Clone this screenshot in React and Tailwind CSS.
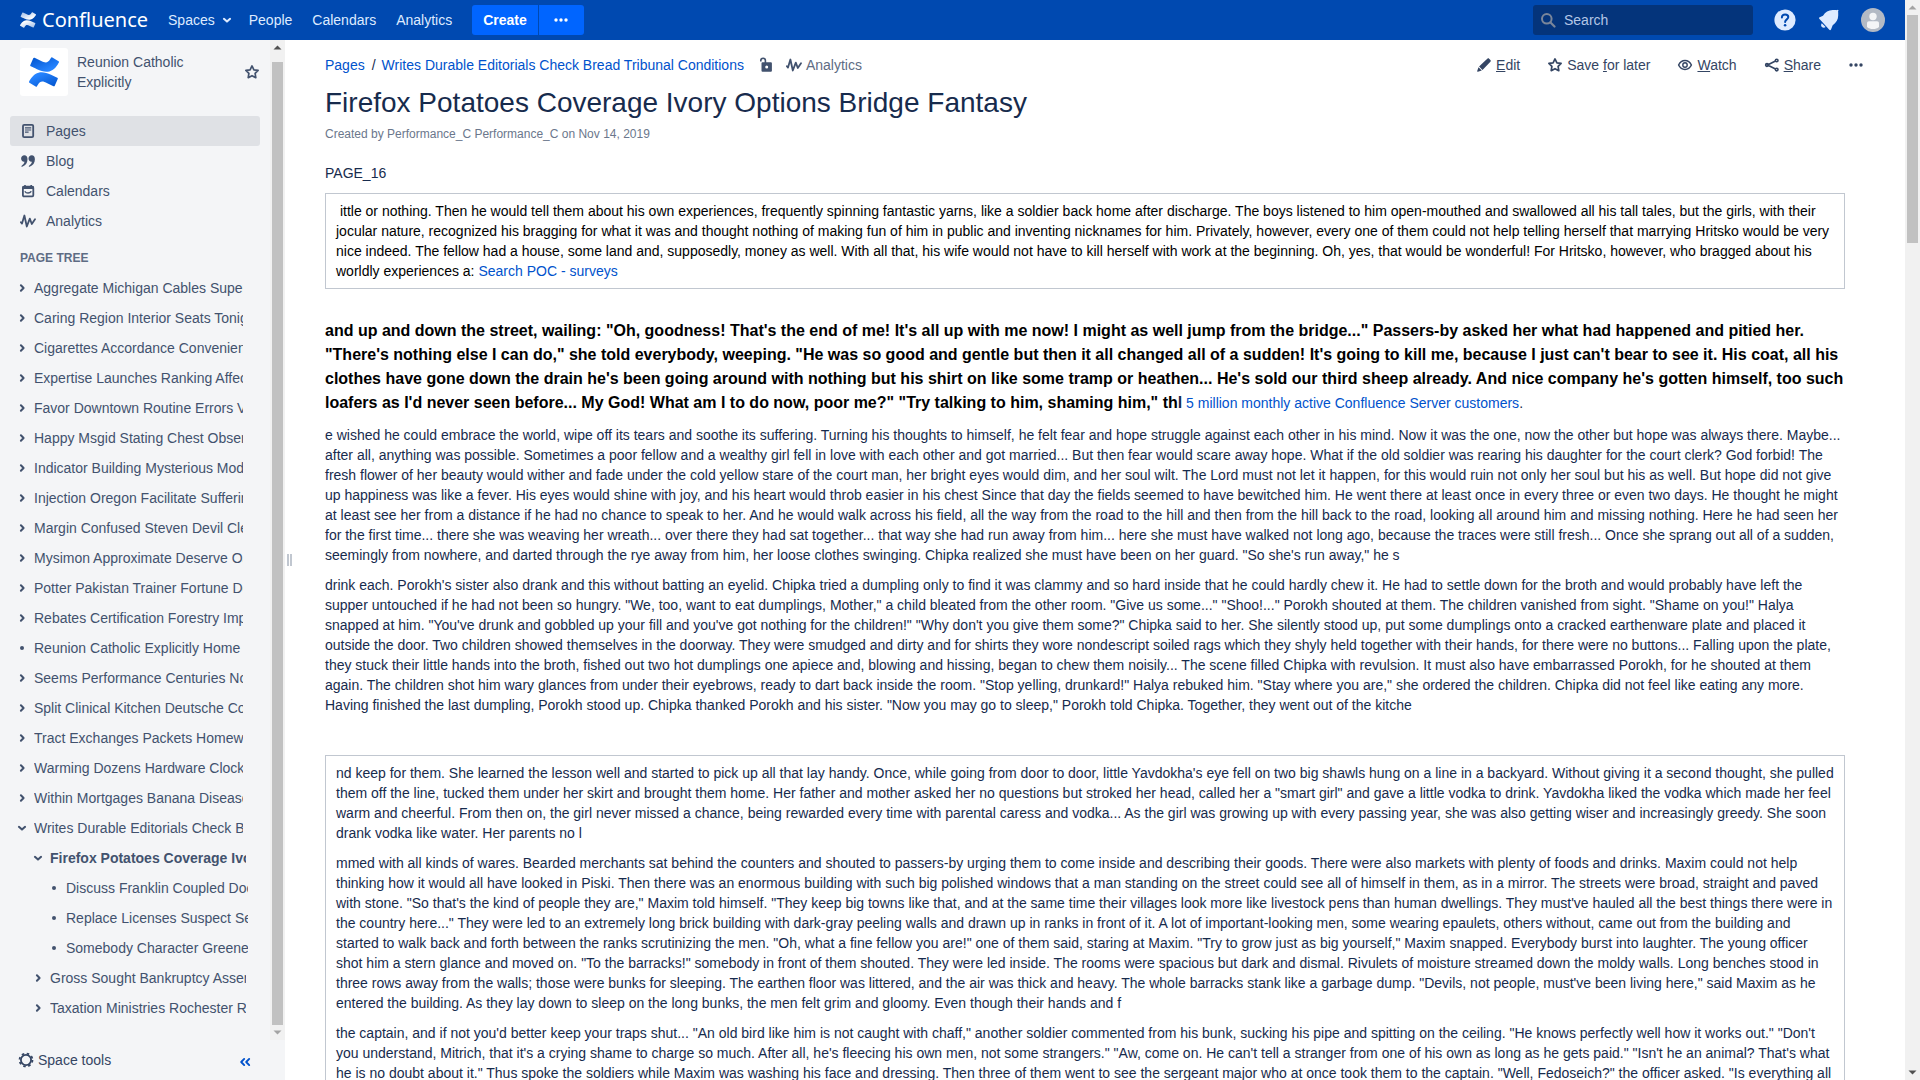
import React from "react";

const iconProps = {
  width: 16,
  height: 16,
  viewBox: "0 0 16 16",
  fill: "none",
  stroke: "currentColor",
  "aria-hidden": true,
  className: "shrink-0",
};

function ConfluenceMark({ id, size, from, to }) {
  return (
    <svg width={size} height={size} viewBox="0 0 24 24" aria-hidden="true" className="shrink-0">
      <defs>
        <linearGradient id={id + "-lower"} x1="1" y1="1" x2="0.2" y2="0.1">
          <stop offset="0" stopColor={from} />
          <stop offset="0.9" stopColor={to} />
        </linearGradient>
        <linearGradient id={id + "-upper"} x1="0" y1="0" x2="0.8" y2="0.9">
          <stop offset="0" stopColor={from} />
          <stop offset="0.9" stopColor={to} />
        </linearGradient>
      </defs>
      <path
        fill={`url(#${id}-lower)`}
        d="M.87 18.257c-.248.382-.53.875-.763 1.245a.764.764 0 0 0 .255 1.04l4.965 3.054a.764.764 0 0 0 1.058-.26c.199-.332.454-.763.733-1.221 1.967-3.247 3.945-2.853 7.508-1.146l4.957 2.337a.764.764 0 0 0 1.028-.382l2.364-5.346a.764.764 0 0 0-.382-1 599.851 599.851 0 0 1-4.965-2.361C10.911 10.97 5.224 11.185.87 18.257z"
      />
      <path
        fill={`url(#${id}-upper)`}
        d="M23.131 5.743c.249-.405.531-.875.764-1.25a.764.764 0 0 0-.256-1.034L18.675.404a.764.764 0 0 0-1.058.26c-.195.335-.451.763-.734 1.225-1.966 3.246-3.945 2.85-7.508 1.146L4.437.694a.764.764 0 0 0-1.027.382L1.046 6.422a.764.764 0 0 0 .382 1c1.039.49 3.105 1.467 4.965 2.361 6.698 3.246 12.392 3.029 16.738-4.04z"
      />
    </svg>
  );
}

function ChevronDown() {
  return (
    <svg {...iconProps}>
      <path d="M4.9 6.8 8 9.6l3.1-2.8" strokeWidth="2" strokeLinecap="round" strokeLinejoin="round" />
    </svg>
  );
}

function ChevronRight() {
  return (
    <svg {...iconProps}>
      <path d="M6.9 5.2 9.6 8l-2.7 2.8" strokeWidth="2" strokeLinecap="round" strokeLinejoin="round" />
    </svg>
  );
}

function Bullet() {
  return (
    <svg {...iconProps} stroke="none">
      <circle cx="8" cy="8" r="2" fill="currentColor" />
    </svg>
  );
}

function Dots() {
  return (
    <svg {...iconProps} stroke="none">
      <g fill="currentColor">
        <circle cx="3" cy="8" r="1.7" />
        <circle cx="8" cy="8" r="1.7" />
        <circle cx="13" cy="8" r="1.7" />
      </g>
    </svg>
  );
}

function Star() {
  return (
    <svg {...iconProps}>
      <path
        d="m8 1.9 1.9 3.9 4.2.6-3 3 .7 4.3L8 11.7l-3.8 2 .7-4.3-3-3 4.2-.6z"
        strokeWidth="1.7"
        strokeLinejoin="round"
      />
    </svg>
  );
}

function PageIcon() {
  return (
    <svg {...iconProps}>
      <rect x="3" y="1.9" width="10.2" height="12.2" rx="1.2" strokeWidth="1.8" />
      <path d="M5 4.9h6.2M5 7h6.2M5 9.1h3.6" strokeWidth="1.2" />
    </svg>
  );
}

function QuoteIcon() {
  return (
    <svg {...iconProps} stroke="none">
      <g fill="currentColor">
        <path d="M4.3 2.2c2 0 3.2 1.5 3.2 4 0 3.6-1.9 6.3-5.3 7.5-.7.2-1.1-.6-.5-1 1.5-1 2.5-2.2 2.8-3.9C2.6 9.1 1.1 7.7 1.1 5.6c0-2 1.4-3.4 3.2-3.4z" />
        <path d="M11.7 2.2c2 0 3.2 1.5 3.2 4 0 3.6-1.9 6.3-5.3 7.5-.7.2-1.1-.6-.5-1 1.5-1 2.5-2.2 2.8-3.9-1.9.3-3.4-1.1-3.4-3.2 0-2 1.4-3.4 3.2-3.4z" />
      </g>
    </svg>
  );
}

function CalendarIcon() {
  return (
    <svg {...iconProps}>
      <rect x="2.9" y="3.7" width="10.4" height="9.6" rx="1" strokeWidth="1.8" />
      <path d="M2.5 4.7h11.2" strokeWidth="2.6" />
      <path d="M5 1.9v2M11.2 1.9v2" strokeWidth="1.6" />
      <path d="M5.2 8.7c.8 1.7 4.8 1.7 5.7 0" strokeWidth="1.4" strokeLinecap="round" />
    </svg>
  );
}

function AnalyticsIcon() {
  return (
    <svg {...iconProps}>
      <path
        d="M.9 9.200 2 10.600 4.400 2.500l2.400 11 3-7.900 2 5.400L15 6.300"
        strokeWidth="1.8"
        strokeLinecap="round"
        strokeLinejoin="round"
      />
    </svg>
  );
}

function UnlockIcon() {
  return (
    <svg {...iconProps}>
      <path d="M2.800 4.600V3.500a2.300 2.300 0 0 1 4.600 0V6" strokeWidth="1.600" />
      <path
        d="M4.500 5.200h8.400a1 1 0 0 1 1 1v7.500a1 1 0 0 1-1 1H4.500a1 1 0 0 1-1-1V6.200a1 1 0 0 1 1-1zM8.700 8.400a1.500 1.500 0 1 0 0 3 1.500 1.500 0 0 0 0-3z"
        fill="currentColor"
        fillRule="evenodd"
        stroke="none"
      />
    </svg>
  );
}

function PencilIcon() {
  return (
    <svg {...iconProps} stroke="none">
      <path
        fill="currentColor"
        d="m9.900 2.900 1.500-1.200c.5-.5 1.200-.5 1.700 0l1.300 1.300c.5.500.5 1.200 0 1.700L6.500 12.900 3.100 9.500zM2.500 10.300l3.300 3.300-3.900 1.200c-.6.100-.9-.200-.7-.7z"
      />
    </svg>
  );
}

function EyeIcon() {
  return (
    <svg {...iconProps}>
      <path
        d="M1.6 8c1.4-2.9 3.7-4.5 6.4-4.5S13 5.1 14.4 8c-1.4 2.9-3.7 4.5-6.4 4.5S3 10.9 1.6 8z"
        strokeWidth="1.5"
        strokeLinejoin="round"
      />
      <circle cx="8" cy="8" r="2.200" strokeWidth="1.400" />
    </svg>
  );
}

function ShareIcon() {
  return (
    <svg {...iconProps}>
      <path d="M3.5 8 12.5 3.5M3.5 8l9 4.5" strokeWidth="1.6" />
      <circle cx="3" cy="8" r="1.3" strokeWidth="1.7" />
      <circle cx="12.7" cy="3.5" r="1.3" strokeWidth="1.6" fill="#fff" />
      <circle cx="12.7" cy="12.6" r="1.3" strokeWidth="1.6" fill="#fff" />
    </svg>
  );
}

function GearIcon() {
  return (
    <svg {...iconProps}>
      <circle cx="8" cy="8" r="5.1" strokeWidth="1.8" />
      <circle cx="8" cy="8" r="6.5" strokeWidth="1.7" strokeDasharray="2.55 2.55" />
    </svg>
  );
}

function SearchIcon() {
  return (
    <svg {...iconProps}>
      <circle cx="6.8" cy="6.8" r="4.8" strokeWidth="2" />
      <path d="m10.5 10.5 4 4" strokeWidth="2.2" strokeLinecap="round" />
    </svg>
  );
}

function CollapseIcon() {
  return (
    <svg {...iconProps}>
      <path
        d="M7.2 4.9 4.2 8l3 3.1M12.2 4.9 9.2 8l3 3.1"
        strokeWidth="1.9"
        strokeLinecap="round"
        strokeLinejoin="round"
      />
    </svg>
  );
}

function HelpIcon() {
  return (
    <svg width="24" height="24" viewBox="0 0 24 24" fill="none" aria-hidden="true">
      <circle cx="12" cy="12" r="10.6" fill="#deebff" />
      <path
        d="M8.9 9.5c0-1.900 1.300-3.100 3.200-3.100s3.200 1.100 3.200 2.700c0 2.300-3.200 2.300-3.200 5"
        stroke="#0049b0"
        strokeWidth="2"
        strokeLinecap="round"
      />
      <circle cx="12.1" cy="17.2" r="1.3" fill="#0049b0" />
    </svg>
  );
}

function BellIcon() {
  return (
    <svg width="24" height="24" viewBox="0 0 24 24" aria-hidden="true">
      <path
        fill="#deebff"
        d="M2.5 11c-.7-.6-.6-1.4.2-1.8L6 7.7c2.2-3.5 5.500-5.600 9.700-5.600h3.200c.3 0 .5.1.7.2l1-.6 1 .9-.6 1.1c.2.3.2.5.2.8v3.100c0 4.200-2.100 7.500-5.500 9.700l-1.700 4.100c-.4.8-1.100 1-1.700.4z"
      />
      <path fill="#deebff" d="M4.800 15.2 8.600 19c-1 1-2.700 1-3.700 0s-1.100-2.700-.1-3.800z" />
    </svg>
  );
}

function AvatarIcon() {
  return (
    <svg width="24" height="24" viewBox="0 0 24 24" aria-hidden="true">
      <circle cx="12" cy="12" r="12" fill="#b3bac5" />
      <circle cx="12" cy="8.5" r="3.7" fill="#f4f5f7" />
      <path d="M6 15.2c0-1.2.8-2 2-2h8c1.2 0 2 .8 2 2V19c-1.6 1.5-3.7 2-6 2s-4.4-.5-6-2z" fill="#f4f5f7" />
    </svg>
  );
}

function ScrollArrow({ up, color }) {
  return (
    <svg width="15" height="15" viewBox="0 0 15 15" aria-hidden="true" className="shrink-0">
      <path d={up ? "M3.5 9.5h8l-4-4z" : "M3.5 5.5h8l-4 4z"} fill={color} />
    </svg>
  );
}

const TREE = [
  ["right", 0, "Aggregate Michigan Cables Superior"],
  ["right", 0, "Caring Region Interior Seats Tonight"],
  ["right", 0, "Cigarettes Accordance Convenient"],
  ["right", 0, "Expertise Launches Ranking Affected"],
  ["right", 0, "Favor Downtown Routine Errors Vary"],
  ["right", 0, "Happy Msgid Stating Chest Observe"],
  ["right", 0, "Indicator Building Mysterious Modes"],
  ["right", 0, "Injection Oregon Facilitate Suffering"],
  ["right", 0, "Margin Confused Steven Devil Clerk"],
  ["right", 0, "Mysimon Approximate Deserve Oak"],
  ["right", 0, "Potter Pakistan Trainer Fortune Dog"],
  ["right", 0, "Rebates Certification Forestry Impact"],
  ["leaf", 0, "Reunion Catholic Explicitly Home"],
  ["right", 0, "Seems Performance Centuries Notes"],
  ["right", 0, "Split Clinical Kitchen Deutsche Cost"],
  ["right", 0, "Tract Exchanges Packets Homework"],
  ["right", 0, "Warming Dozens Hardware Clocks"],
  ["right", 0, "Within Mortgages Banana Diseases"],
  ["down", 0, "Writes Durable Editorials Check Bread Tribunal Conditions"],
  ["down", 1, "Firefox Potatoes Coverage Ivory Options Bridge Fantasy", true],
  ["leaf", 2, "Discuss Franklin Coupled Document"],
  ["leaf", 2, "Replace Licenses Suspect Separate"],
  ["leaf", 2, "Somebody Character Greene"],
  ["right", 1, "Gross Sought Bankruptcy Assembly"],
  ["right", 1, "Taxation Ministries Rochester Road"],
];

const INDENT = ["pl-3.5 pr-[27px]", "pl-[30px] pr-6", "pl-[46px] pr-[22px]"];

const NAV = [
  ["Pages", PageIcon],
  ["Blog", QuoteIcon],
  ["Calendars", CalendarIcon],
  ["Analytics", AnalyticsIcon],
];

const INTRO =
  "ittle or nothing. Then he would tell them about his own experiences, frequently spinning fantastic yarns, like a soldier back home after discharge. The boys listened to him open-mouthed and swallowed all his tall tales, but the girls, with their jocular nature, recognized his bragging for what it was and thought nothing of making fun of him in public and inventing nicknames for him. Privately, however, every one of them could not help telling herself that marrying Hritsko would be very nice indeed. The fellow had a house, some land and, supposedly, money as well. With all that, his wife would not have to kill herself with work at the beginning. Oh, yes, that would be wonderful! For Hritsko, however, who bragged about his worldly experiences a:";

const LEAD =
  "and up and down the street, wailing: \"Oh, goodness! That's the end of me! It's all up with me now! I might as well jump from the bridge...\" Passers-by asked her what had happened and pitied her. \"There's nothing else I can do,\" she told everybody, weeping. \"He was so good and gentle but then it all changed all of a sudden! It's going to kill me, because I just can't bear to see it. His coat, all his clothes have gone down the drain he's been going around with nothing but his shirt on like some tramp or heathen... He's sold our third sheep already. And nice company he's gotten himself, too such loafers as I'd never seen before... My God! What am I to do now, poor me?\" \"Try talking to him, shaming him,\" th";

const BODY = [
  "e wished he could embrace the world, wipe off its tears and soothe its suffering. Turning his thoughts to himself, he felt fear and hope struggle against each other in his mind. Now it was the one, now the other but hope was always there. Maybe... after all, anything was possible. Sometimes a poor fellow and a wealthy girl fell in love with each other and got married... But then fear would scare away hope. What if the old soldier was rearing his daughter for the court clerk? God forbid! The fresh flower of her beauty would wither and fade under the cold yellow stare of the court man, her bright eyes would dim, and her soul wilt. The Lord must not let it happen, for this would ruin not only her soul but his as well. But hope did not give up happiness was like a fever. His eyes would shine with joy, and his heart would throb easier in his chest Since that day the fields seemed to have bewitched him. He went there at least once in every three or even two days. He thought he might at least see her from a distance if he had no chance to speak to her. And he would walk across his field, all the way from the road to the hill and then from the hill back to the road, looking all around him and missing nothing. Here he had seen her for the first time... there she was weaving her wreath... over there they had sat together... that way she had run away from him... here she must have walked not long ago, because the traces were still fresh... Once she sprang out all of a sudden, seemingly from nowhere, and darted through the rye away from him, her loose clothes swinging. Chipka realized she must have been on her guard. \"So she's run away,\" he s",
  "drink each. Porokh's sister also drank and this without batting an eyelid. Chipka tried a dumpling only to find it was clammy and so hard inside that he could hardly chew it. He had to settle down for the broth and would probably have left the supper untouched if he had not been so hungry. \"We, too, want to eat dumplings, Mother,\" a child bleated from the other room. \"Give us some...\" \"Shoo!...\" Porokh shouted at them. The children vanished from sight. \"Shame on you!\" Halya snapped at him. \"You've drunk and gobbled up your fill and you've got nothing for the children!\" \"Why don't you give them some?\" Chipka said to her. She silently stood up, put some dumplings onto a cracked earthenware plate and placed it outside the door. Two children showed themselves in the doorway. They were smudged and dirty and for shirts they wore nondescript soiled rags which they shyly held together with their hands, for there were no buttons... Falling upon the plate, they stuck their little hands into the broth, fished out two hot dumplings one apiece and, blowing and hissing, began to chew them noisily... The scene filled Chipka with revulsion. It must also have embarrassed Porokh, for he shouted at them again. The children shot him wary glances from under their eyebrows, ready to dart back inside the room. \"Stop yelling, drunkard!\" Halya rebuked him. \"Stay where you are,\" she ordered the children. Chipka did not feel like eating any more. Having finished the last dumpling, Porokh stood up. Chipka thanked Porokh and his sister. \"Now you may go to sleep,\" Porokh told Chipka. Together, they went out of the kitche",
];

const CELL = [
  "nd keep for them. She learned the lesson well and started to pick up all that lay handy. Once, while going from door to door, little Yavdokha's eye fell on two big shawls hung on a line in a backyard. Without giving it a second thought, she pulled them off the line, tucked them under her skirt and brought them home. Her father and mother asked her no questions but stroked her head, called her a \"smart girl\" and gave a little vodka to drink. Yavdokha liked the vodka which made her feel warm and cheerful. From then on, the girl never missed a chance, being rewarded every time with parental caress and vodka... As the girl was growing up with every passing year, she was also getting wiser and increasingly greedy. She soon drank vodka like water. Her parents no l",
  "mmed with all kinds of wares. Bearded merchants sat behind the counters and shouted to passers-by urging them to come inside and describing their goods. There were also markets with plenty of foods and drinks. Maxim could not help thinking how it would all have looked in Piski. Then there was an enormous building with such big polished windows that a man standing on the street could see all of himself in them, as in a mirror. The streets were broad, straight and paved with stone. \"So that's the kind of people they are,\" Maxim told himself. \"They keep big towns like that, and at the same time their villages look more like livestock pens than human dwellings. They must've hauled all the best things there were in the country here...\" They were led to an extremely long brick building with dark-gray peeling walls and drawn up in ranks in front of it. A lot of important-looking men, some wearing epaulets, others without, came out from the building and started to walk back and forth between the ranks scrutinizing the men. \"Oh, what a fine fellow you are!\" one of them said, staring at Maxim. \"Try to grow just as big yourself,\" Maxim snapped. Everybody burst into laughter. The young officer shot him a stern glance and moved on. \"To the barracks!\" somebody in front of them shouted. They were led inside. The rooms were spacious but dark and dismal. Rivulets of moisture streamed down the moldy walls. Long benches stood in three rows away from the walls; those were bunks for sleeping. The earthen floor was littered, and the air was thick and heavy. The whole barracks stank like a garbage dump. \"Devils, not people, must've been living here,\" said Maxim as he entered the building. As they lay down to sleep on the long bunks, the men felt grim and gloomy. Even though their hands and f",
  "the captain, and if not you'd better keep your traps shut... \"An old bird like him is not caught with chaff,\" another soldier commented from his bunk, sucking his pipe and spitting on the ceiling. \"He knows perfectly well how it works out.\" \"Don't you understand, Mitrich, that it's a crying shame to charge so much. After all, he's fleecing his own men, not some strangers.\" \"Aw, come on. He can't tell a stranger from one of his own as long as he gets paid.\" \"Isn't he an animal? That's what he is no doubt about it.\" Thus spoke the soldiers while Maxim was washing his face and dressing. Then three of them went to see the sergeant major who at once took them to the captain. \"Well, Fedoseich?\" the officer asked. \"Is everything all",
];

function Header() {
  return (
    <header className="flex h-10 shrink-0 items-center bg-[#0049b0] pl-5 pr-5 text-[#deebff]">
      <a href="#home" className="flex items-center gap-1.5 text-white">
        <ConfluenceMark id="brand" size={16} from="#9dbbe6" to="#ffffff" />
        <span className="font-['Noto_Sans',sans-serif] text-[20px] leading-6">Confluence</span>
      </a>
      <nav className="ml-5 flex items-center">
        <button type="button" className="flex items-center gap-1">
          Spaces
          <ChevronDown />
        </button>
        <a href="#people" className="ml-3.5">People</a>
        <a href="#calendars" className="ml-5">Calendars</a>
        <a href="#analytics" className="ml-5">Analytics</a>
      </nav>
      <div className="ml-5 flex gap-px">
        <button type="button" className="h-[30px] rounded-l-[3px] bg-[#0065ff] px-[11px] font-bold text-white">
          Create
        </button>
        <button type="button" aria-label="More" className="flex h-[30px] w-[45px] items-center justify-center rounded-r-[3px] bg-[#0065ff] text-white">
          <Dots />
        </button>
      </div>
      <div className="ml-auto flex items-center">
        <label className="flex h-[30px] w-[220px] items-center gap-2 rounded-[3px] bg-[#04347b] pl-[7px] text-[#7a869a]">
          <SearchIcon />
          <input
            type="text"
            placeholder="Search"
            aria-label="Search"
            className="w-full bg-transparent text-[#deebff] outline-none placeholder:text-[#b3c6e6]"
          />
        </label>
        <button type="button" aria-label="Help" className="ml-5">
          <HelpIcon />
        </button>
        <button type="button" aria-label="Notifications" className="ml-5">
          <BellIcon />
        </button>
        <button type="button" aria-label="Profile" className="ml-5">
          <AvatarIcon />
        </button>
      </div>
    </header>
  );
}

function Sidebar() {
  return (
    <aside className="flex w-[285px] shrink-0 flex-col bg-[#f4f5f7] text-[#42526e]">
      <div className="flex min-h-0 flex-1">
        <div className="min-w-0 flex-1 overflow-hidden pt-2">
          <div className="flex items-center pl-5 pr-2.5">
            <div className="flex size-12 shrink-0 items-center justify-center rounded-[3px] bg-white">
              <ConfluenceMark id="space" size={30} from="#0052cc" to="#2684ff" />
            </div>
            <a href="#space" className="ml-[9px] w-[150px]">Reunion Catholic Explicitly</a>
            <button type="button" aria-label="Favourite" className="ml-auto">
              <Star />
            </button>
          </div>
          <nav className="mt-5 px-2.5">
            {NAV.map(([label, Icon], i) => (
              <a
                key={label}
                href={"#" + label.toLowerCase()}
                className={
                  "flex h-[30px] items-center gap-2.5 rounded-[3px] px-2.5 " + (i === 0 ? "bg-[#dfe1e5]" : "")
                }
              >
                <Icon />
                {label}
              </a>
            ))}
          </nav>
          <h2 className="mt-3 px-5 text-xs leading-5 font-bold text-[#5e6c84] uppercase">Page tree</h2>
          <ul className="mt-[5px]">
            {TREE.map(([kind, level, label, current]) => (
              <li key={label} className={"flex h-[30px] items-center gap-1 " + INDENT[level]}>
                {kind === "right" && <ChevronRight />}
                {kind === "down" && <ChevronDown />}
                {kind === "leaf" && <Bullet />}
                <a
                  href="#page"
                  className={"min-w-0 flex-1 overflow-hidden whitespace-nowrap " + (current ? "font-bold" : "")}
                >
                  {label}
                </a>
              </li>
            ))}
          </ul>
        </div>
        <div className="flex w-[15px] shrink-0 flex-col bg-[#f1f1f1]" aria-hidden="true">
          <ScrollArrow up color="#505050" />
          <div className="mx-0.5 mt-[7px] flex-1 bg-[#c1c1c1]" />
          <ScrollArrow color="#a3a3a3" />
        </div>
      </div>
      <div className="flex h-10 shrink-0 items-center justify-between pl-[18px] pr-8">
        <button type="button" className="flex items-center gap-1 text-[#344563]">
          <GearIcon />
          Space tools
        </button>
        <button type="button" aria-label="Collapse sidebar" className="pt-1 text-[#0052cc]">
          <CollapseIcon />
        </button>
      </div>
    </aside>
  );
}

function Action({ icon, children }) {
  return (
    <button type="button" className="flex items-center gap-1">
      {icon}
      <span>{children}</span>
    </button>
  );
}

function Content() {
  return (
    <main className="min-w-0 flex-1 overflow-hidden pt-[15px]">
      <div className="flex items-center justify-between pl-[33px] pr-[41px]">
        <nav className="flex items-center">
          <a href="#pages" className="text-[#0052cc]">Pages</a>
          <span className="ml-[7px] mr-1.5">/</span>
          <a href="#parent" className="text-[#0052cc]">
            Writes Durable Editorials Check Bread Tribunal Conditions
          </a>
          <button type="button" aria-label="Restrictions" className="ml-3.5 text-[#42526e]">
            <UnlockIcon />
          </button>
          <a href="#page-analytics" className="ml-3 flex items-center gap-1 text-[#42526e]">
            <AnalyticsIcon />
            <span className="text-[#5e6c84]">Analytics</span>
          </a>
        </nav>
        <div className="flex items-center gap-[27px] text-[#344563]">
          <Action icon={<PencilIcon />}>
            <u>E</u>dit
          </Action>
          <Action icon={<Star />}>
            Save <u>f</u>or later
          </Action>
          <Action icon={<EyeIcon />}>
            <u>W</u>atch
          </Action>
          <Action icon={<ShareIcon />}>
            <u>S</u>hare
          </Action>
          <button type="button" aria-label="More actions">
            <Dots />
          </button>
        </div>
      </div>
      <article className="pr-[60px] pl-[33px]">
        <h1 className="mt-3 text-[28px] leading-8">Firefox Potatoes Coverage Ivory Options Bridge Fantasy</h1>
        <p className="mt-[5px] text-xs leading-5 text-[#6b778c]">
          Created by Performance_C Performance_C on Nov 14, 2019
        </p>
        <p className="mt-[19px]">PAGE_16</p>
        <table className="mt-2.5 w-full border border-[#c1c7d0]">
          <tbody>
            <tr>
              <td className="px-2.5 py-[7px] text-black">
                {"\u00a0"}
                {INTRO}{" "}
                <a href="#surveys" className="text-[#0052cc]">Search POC - surveys</a>
              </td>
            </tr>
          </tbody>
        </table>
        <p className="mt-[30px] leading-6">
          <strong className="text-base leading-6 text-black">{LEAD}</strong>
          <strong className="text-base leading-6">l</strong>{" "}
          <a href="#customers" className="text-[#0052cc]">5 million monthly active Confluence Server customers</a>.
        </p>
        {BODY.map((text) => (
          <p key={text} className="mt-2.5">{text}</p>
        ))}
        <table className="mt-10 w-full border border-[#c1c7d0]">
          <tbody>
            <tr>
              <td className="px-2.5 py-[7px]">
                <div className="flex flex-col gap-2.5">
                  {CELL.map((text) => (
                    <p key={text}>{text}</p>
                  ))}
                </div>
              </td>
            </tr>
          </tbody>
        </table>
      </article>
    </main>
  );
}

export default function App() {
  return (
    <div className="flex h-screen overflow-hidden bg-white font-['Liberation_Sans',Arial,sans-serif] text-sm leading-5 text-[#172b4d]">
      <div className="flex min-w-0 flex-1 flex-col">
        <Header />
        <div className="flex min-h-0 flex-1">
          <Sidebar />
          <div className="flex w-[7px] shrink-0 items-center justify-center gap-px pl-0.5" aria-hidden="true">
            <span className="h-3 w-0.5 bg-[#c1c7d0]" />
            <span className="h-3 w-0.5 bg-[#c1c7d0]" />
          </div>
          <Content />
        </div>
      </div>
      <div className="flex w-[15px] shrink-0 flex-col bg-[#f1f1f1]" aria-hidden="true">
        <ScrollArrow up color="#a3a3a3" />
        <div className="mx-0.5 h-[228px] bg-[#c1c1c1]" />
        <div className="mt-auto flex">
          <ScrollArrow color="#505050" />
        </div>
      </div>
    </div>
  );
}
